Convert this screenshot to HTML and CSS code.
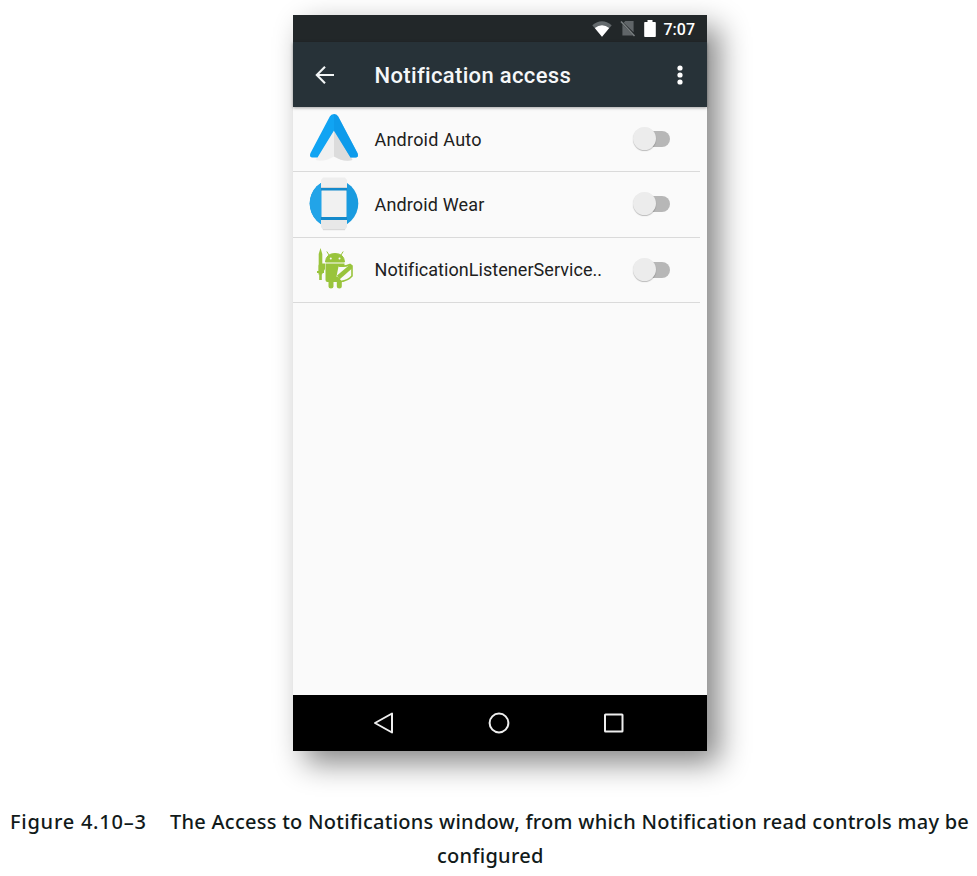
FILE: index.html
```html
<!DOCTYPE html>
<html lang="en">
<head>
<meta charset="utf-8">
<title>Notification access</title>
<link rel="stylesheet" href="styles.css">
</head>
<body>
<figure class="figure">
  <div class="phone">
    <div class="status">
      <svg class="wifi" width="20" height="16" viewBox="0 0 20 16"><path d="M.3 4.2Q10-3.6 19.7 4.2L10 15.8Z" fill="#646a6d"/><path d="M2.800 7Q10 1.400 17.200 7L10 15.8Z" fill="#fff"/></svg>
      <svg class="sim" width="16" height="17" viewBox="0 0 16 17"><path d="M5.3 1H13.6V12.2L3.6 2.7ZM2.4 4.2L13 15.6H2.4Z" fill="#606568"/><path d="M1 1.5L14.5 16" stroke="#7b8082" stroke-width="1.5"/></svg>
      <svg class="battery" width="12" height="17" viewBox="0 0 12 17"><path d="M3.5 0h5v2H11q.8 0 .8.8v13.4q0 .8-.8.8H1q-.8 0-.8-.8V2.8Q.2 2 1 2h2.500Z" fill="#fff"/></svg>
      <span class="clock">7:07</span>
    </div>
    <header class="appbar">
      <svg class="back" width="20" height="20" viewBox="0 0 20 20" fill="none" stroke="#f2f5f6" stroke-width="2.100"><path d="M19 10H2.500M10 1.700L1.800 10L10 18.300"/></svg>
      <h1 class="title">Notification access</h1>
      <svg class="more" width="6" height="20" viewBox="0 0 6 20" fill="#fff"><circle cx="3" cy="3" r="2.600"/><circle cx="3" cy="10" r="2.600"/><circle cx="3" cy="17" r="2.600"/></svg>
    </header>
    <ul class="list">
      <li class="row">
        <svg class="icon" width="52" height="56" viewBox="0 0 52 56">
          <path d="M26 15L44.500 49Q36 51.500 26 45.500Q16 51.500 7.500 49Z" fill="#f0f0f0"/>
          <path d="M26 15L44.500 49Q36 51.500 26 45.500Z" fill="#dcdcdc"/>
          <path d="M21.800 5.600Q23 3 26 3T30.200 5.600L49.600 42.300Q51 46.500 47.500 46.500H42.500L26 19.500L9.500 46.500H4.500Q1 46.500 2.400 42.300Z" fill="#10a4f3"/>
          <path d="M26 20V3Q29 3 30.200 5.600L49.600 42.300Q51 46.500 47.500 46.500H42.500Z" fill="#0b94e3" opacity=".55"/>
        </svg>
        <span class="label auto">Android Auto</span><span class="switch"></span>
      </li>
      <li class="row">
        <svg class="icon" width="52" height="56" viewBox="0 0 52 56">
          <circle cx="26" cy="27.500" r="24.300" fill="#1a9bdf"/>
          <path d="M26 3.200A24.300 24.300 0 0 0 26 51.800Z" fill="#22a4e8"/>
          <path d="M15 1.500H37L39 4V11.500H13V4Z" fill="#eee"/><path d="M13 43.500H39V51L37 54H15L13 51Z" fill="#e8e8e8"/>
          <path d="M13 11.500H39V15H13ZM13 40.500H39V44H13Z" fill="#1489cb"/>
          <path d="M13.500 14.500H38.500V41H13.500Z" fill="#f1f1f1"/>
          <path d="M13 11.500H39M15 53.700H37" stroke="#d5d5d5"/>
        </svg>
        <span class="label wear">Android Wear</span><span class="switch"></span>
      </li>
      <li class="row">
        <svg class="icon" width="52" height="56" viewBox="0 0 52 56" fill="#99c43c">
          <path d="M12.500 6L14.300 12V29H16V31H13.800V38H11.200V31H9V29H10.700V12Z"/>
          <path d="M17.500 20Q18 11.500 27 11.500T36.500 20ZM21 13L18.800 9.500M33 13L35.200 9.500" stroke="#99c43c"/>
          <path d="M17.500 21.500H36.500V38Q36.500 40 34.500 40H19.500Q17.500 40 17.500 38ZM10.500 24Q10.500 21.500 13 21.500H17V27L14 32.500H10.500ZM20.500 39H25.500V44.500Q25.500 46.500 23 46.500T20.500 44.500ZM28.800 39H33.800V44.500Q33.800 46.500 31.300 46.500T28.800 44.500Z"/>
          <circle cx="22.800" cy="16.500" r="1" fill="#fafafa"/><circle cx="31.500" cy="16.500" r="1" fill="#fafafa"/>
          <path d="M30.500 24.500Q37 26 42.500 22.500L44.200 24V34Q40 38.500 33.500 39.500L28.500 34.500Z" fill="#fafafa"/>
          <path d="M29 33.500L42 22.500L44 24V26.500L31.500 37.500Z"/>
          <path d="M31 24Q37 25 42 22.500L44 24V34Q40 38.500 33 39.500L29 35" fill="none" stroke="#99c43c" stroke-width="1.600"/>
        </svg>
        <span class="label listener">NotificationListenerService..</span><span class="switch"></span>
      </li>
    </ul>
    <nav class="nav">
      <svg width="22" height="22" viewBox="0 0 22 22"><path d="M19 1.500V20.500L2 11Z"/></svg>
      <svg width="22" height="22" viewBox="0 0 22 22"><circle cx="11" cy="11" r="9.400"/></svg>
      <svg width="22" height="22" viewBox="0 0 22 22"><rect x="2" y="2.500" width="17.500" height="17" rx=".5"/></svg>
    </nav>
  </div>
  <figcaption class="caption">
    <div class="line"><span class="number">Figure 4.10–3</span><span class="text">The Access to Notifications window, from which Notification read controls may be</span></div>
    <div class="line"><span class="rest">configured</span></div>
  </figcaption>
</figure>
</body>
</html>
```
FILE: styles.css
```css
* { box-sizing: border-box; }
body { margin: 0; background: #fff; }
.figure { margin: 0; padding-top: 15px; width: 977px; height: 876px; overflow: hidden; }
.phone {
  width: 414px; height: 735.5px; margin-left: 292.5px;
  display: flex; flex-direction: column;
  background: #fafafa; color: #202020;
  font-family: Roboto, sans-serif;
  box-shadow: 12px 12px 28px rgba(0, 0, 0, .48);
}
.status { height: 27px; background: #222729; display: flex; align-items: center; padding-left: 299px; color: #fff; }
.sim { margin-left: 8px; }
.battery { margin-left: 8px; }
.clock { margin-left: 8px; padding-top: 1px; font-size: 16px; font-weight: 500; line-height: 27px; }
.appbar { height: 65px; background: #273238; display: flex; align-items: center; padding: 0 24px 0 22px; color: #f5f7f8; box-shadow: 0 1px 3px rgba(0, 0, 0, .35); }
.title { margin: 0 0 0 40px; padding-top: 2px; flex: 1; font-size: 22px; font-weight: 500; line-height: 26px; white-space: nowrap; letter-spacing: .34px; }
.list { list-style: none; margin: 0; padding: 0; flex: 1; }
.row { height: 65.300px; width: 407px; border-bottom: 1px solid #dadada; display: flex; align-items: center; padding: 0 30px 0 15px; }
.icon { margin-right: 15px; flex: none; }
.label { flex: 1; padding-top: 1px; font-size: 18px; line-height: 24px; white-space: nowrap; }
.auto { letter-spacing: .22px; }
.wear { letter-spacing: .15px; }
.listener { letter-spacing: .05px; }
.switch { width: 38px; height: 24px; flex: none; position: relative; }
.switch::before { content: ""; position: absolute; left: 8px; right: 0; top: 4px; height: 16px; border-radius: 8px; background: #b7b7b7; }
.switch::after { content: ""; position: absolute; left: 1px; top: 0; width: 23px; height: 23px; border-radius: 50%; background: #ececec; box-shadow: 0 1px 1px rgba(0, 0, 0, .25); }
.nav { height: 56px; background: #000; display: flex; padding: 17px 82px 0 80px; justify-content: space-between; }
.nav svg { fill: none; stroke: #eee; stroke-width: 2; stroke-linejoin: round; }
.caption { margin-top: 54.5px; color: #111a1a; font-family: "Noto Sans", sans-serif; font-size: 20px; font-weight: 500; line-height: 34px; letter-spacing: .26px; }
.line { display: flex; white-space: nowrap; }
.number { margin-left: 10px; width: 160px; letter-spacing: .75px; }
.rest { margin-left: 437px; }
```
